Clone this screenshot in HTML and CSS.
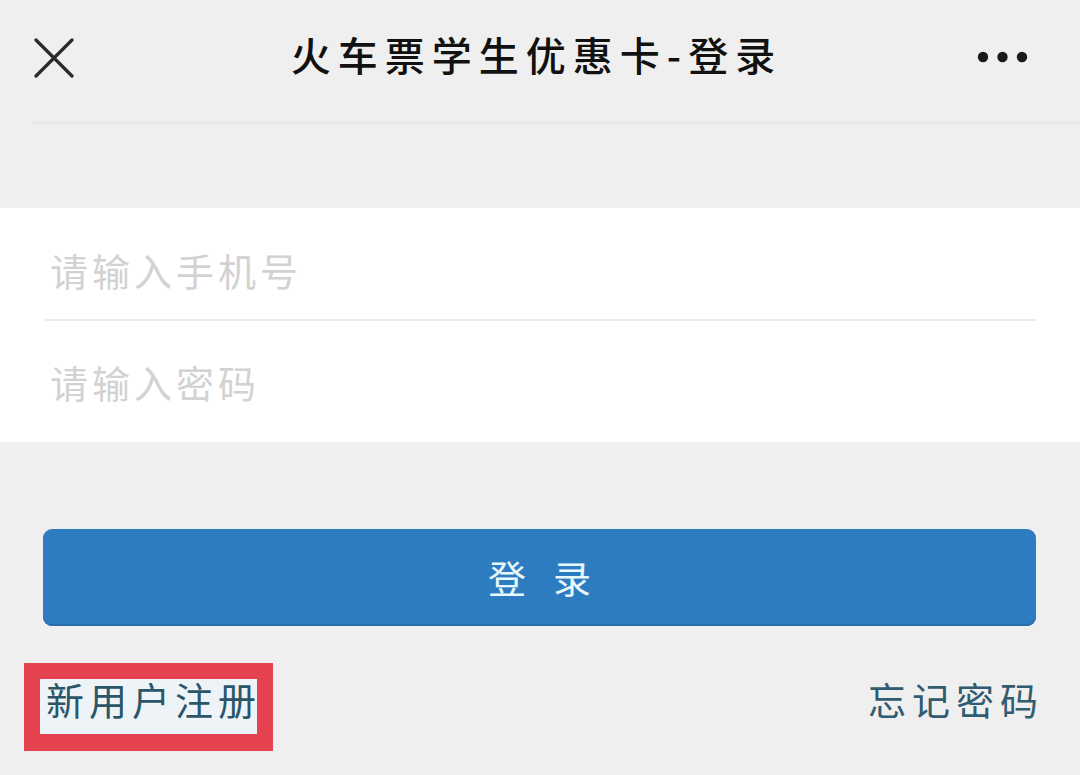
FILE: index.html
```html
<!DOCTYPE html>
<html lang="zh-CN">
<head>
<meta charset="utf-8">
<title>火车票学生优惠卡-登录</title>
<link rel="stylesheet" href="styles.css">
</head>
<body>
<header class="topbar">
  <div class="close">
    <svg width="40" height="40" viewBox="0 0 40 40"><path d="M2 2 L38 38 M38 2 L2 38" stroke="#2b2b2b" stroke-width="3.2" stroke-linecap="round" fill="none"/></svg>
  </div>
  <h1 class="title">火车票学生优惠卡-登录</h1>
  <div class="more">
    <svg width="52" height="12" viewBox="0 0 52 12"><circle cx="6" cy="6" r="5.2" fill="#1a1a1a"/><circle cx="25.5" cy="6" r="5.2" fill="#1a1a1a"/><circle cx="45" cy="6" r="5.2" fill="#1a1a1a"/></svg>
  </div>
</header>
<div class="topline"></div>
<main class="content">
  <section class="form">
    <div class="field first"><span class="placeholder">请输入手机号</span></div>
    <div class="divider"></div>
    <div class="field second"><span class="placeholder">请输入密码</span></div>
  </section>
  <div class="btn-wrap">
    <button class="login">登录</button>
  </div>
  <div class="links">
    <a class="register">新用户注册</a>
    <a class="forgot">忘记密码</a>
  </div>
</main>
</body>
</html>
```

FILE: styles.css
```css
html, body {
  margin: 0;
  padding: 0;
}
body {
  width: 1080px;
  height: 775px;
  overflow: hidden;
  background: #efefef;
  font-family: "Noto Sans CJK SC", "Noto Sans", sans-serif;
}
.topbar {
  height: 121px;
  display: grid;
  grid-template-columns: 1fr auto 1fr;
  align-items: center;
  padding: 0 51px 0 34px;
  box-sizing: border-box;
}
.close {
  width: 40px;
  height: 40px;
  margin-top: -6px;
  justify-self: start;
}
.close svg, .more svg { display: block; }
.more {
  margin-top: -8px;
  justify-self: end;
}
.title {
  margin: -14px 0 0 10px;
  font-size: 40px;
  line-height: 48px;
  font-weight: 500;
  color: #111;
  letter-spacing: 7px;
}
.topline {
  height: 3px;
  margin-left: 32px;
  background: #e8e8e8;
}
.content {
  padding-top: 84px;
}
.form {
  background: #fff;
  display: flex;
  flex-direction: column;
}
.field {
  padding-left: 50px;
  display: flex;
  align-items: center;
}
.field.first {
  height: 111px;
  padding-top: 12px;
  box-sizing: border-box;
}
.field.second {
  height: 121px;
  box-sizing: border-box;
}
.placeholder {
  font-size: 38px;
  line-height: 44px;
  letter-spacing: 4px;
  color: #d2d2d2;
}
.divider {
  height: 2px;
  margin: 0 43px 0 45px;
  background: #ececec;
}
.btn-wrap {
  padding: 87px 44px 0 43px;
}
.login {
  display: block;
  width: 100%;
  height: 97px;
  border: none;
  border-radius: 9px;
  background: #2e7cc0;
  box-shadow: inset 0 -2px 0 #2a6ea9;
  color: #e8f7fb;
  font-family: "Noto Sans CJK SC", "Noto Sans", sans-serif;
  font-size: 38px;
  letter-spacing: 27px;
  text-indent: 27px;
  padding: 0 0 2px 0;
}
.links {
  display: flex;
  justify-content: space-between;
  align-items: center;
  padding: 37px 40px 0 24px;
}
.register {
  display: block;
  border: 16px solid #e5434f;
  border-bottom-width: 17px;
  background: #eef3f7;
  box-sizing: border-box;
  width: 249px;
  height: 88px;
  font-size: 38px;
  line-height: 40px;
  letter-spacing: 5px;
  padding-left: 6px;
  color: #2a5668;
  white-space: nowrap;
}
.forgot {
  display: block;
  font-size: 38px;
  line-height: 50px;
  letter-spacing: 6px;
  color: #2f5c70;
  margin-top: -16px;
  margin-right: -4px;
}
```
